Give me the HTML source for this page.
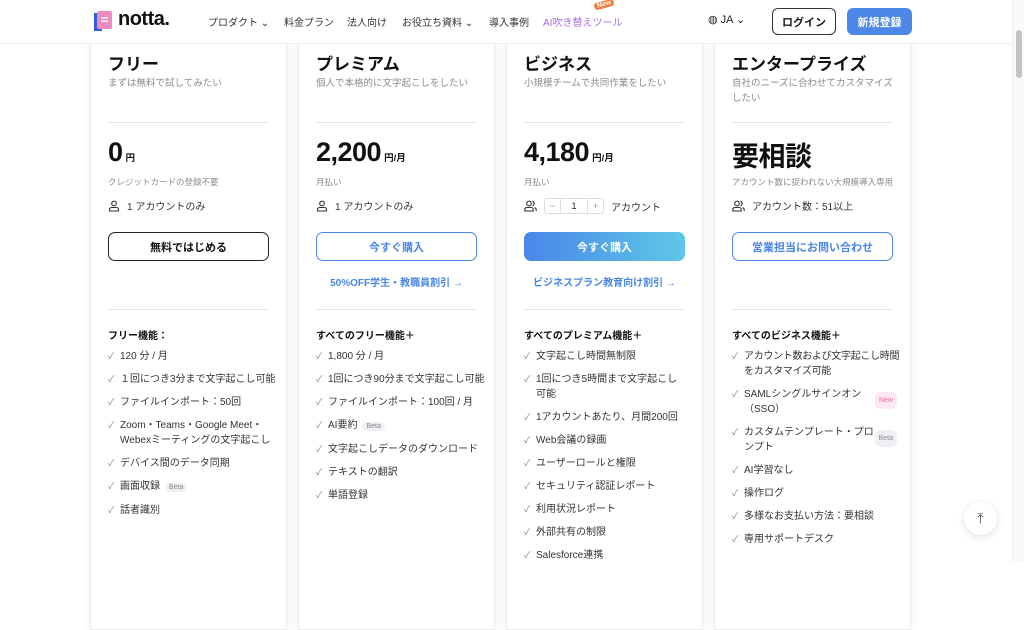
<!DOCTYPE html>
<html><head><meta charset="utf-8">
<style>
*{box-sizing:border-box;margin:0;padding:0}
body{width:1024px;height:562px;overflow:hidden;background:#fff;font-family:"Liberation Sans","Noto Sans CJK JP",sans-serif;color:#1d1d1f;position:relative}
.card{position:absolute;top:30px;width:197px;height:600px;background:#fff;border:1px solid #ececec;box-shadow:0 0 10px rgba(0,0,0,.07);padding:0 17px}
.t{position:absolute;left:17px;top:19px;font-size:17px;font-weight:bold;color:#111}
.s{position:absolute;left:17px;top:45px;width:165px;font-size:9.5px;color:#8a8a8f;line-height:15px}
.hr{position:absolute;left:17px;right:17px;height:1px;background:#e8e8ea}
.p{position:absolute;left:17px;top:106px;font-size:27px;font-weight:bold;color:#111;letter-spacing:-0.5px}
.p small{font-size:9.5px;letter-spacing:0;margin-left:3px}
.n{position:absolute;left:17px;top:145px;font-size:8.5px;color:#8a8a8f}
.a{position:absolute;left:17px;top:167px;font-size:10px;color:#333;display:flex;align-items:center;gap:7px}
.b{position:absolute;left:17px;right:17px;top:201px;height:29px;border-radius:7px;font-size:11px;font-weight:bold;display:flex;align-items:center;justify-content:center}
.l{position:absolute;left:0;right:0;top:243px;text-align:center;font-size:10px;font-weight:bold;color:#4a86e8}
.fh{position:absolute;left:17px;top:296px;font-size:10px;font-weight:bold;color:#111}
ul{position:absolute;left:17px;right:15px;top:318px;list-style:none}
li{font-size:10px;line-height:15px;color:#333;margin-bottom:8px;padding-left:12px;position:relative}
li:before{content:"✓";position:absolute;left:0;top:0;color:#888;font-size:9px}
.tag{font-size:7px;color:#888;background:#eef0f3;border-radius:6px;padding:1px 4px;margin-left:5px}
.tagn{color:#e86aa0;background:#fde8f1}
li.r{padding-right:18px;white-space:nowrap}
li.r .tag{position:absolute;right:-4px;top:5px}
header{position:absolute;top:0;left:0;width:1012px;height:44px;background:#fff;border-bottom:1px solid #eee;z-index:5}
nav span{position:absolute;top:14px;font-size:10px;color:#333}
.sb{position:absolute;right:0;top:0;width:12px;height:562px;background:#fafafa;border-left:1px solid #eee;z-index:6}
.sb div{position:absolute;left:3px;top:30px;width:6px;height:48px;background:#c4c4c4;border-radius:3px}
</style></head><body>
<header>
<svg style="position:absolute;left:92px;top:10px" width="22" height="24" viewBox="0 0 22 24"><rect x="2" y="3" width="8" height="18" fill="#2f5fe0"/><rect x="5" y="1" width="15" height="18" rx="2" fill="#f08bc0"/><rect x="9" y="7" width="7" height="1.5" fill="#fff"/><rect x="9" y="10.5" width="7" height="1.5" fill="#fff"/></svg>
<div style="position:absolute;left:118px;top:8px;font-size:20px;font-weight:bold;color:#111;letter-spacing:-0.5px">notta.</div>
<nav>
<span style="left:208px">プロダクト ⌄</span>
<span style="left:284px">料金プラン</span>
<span style="left:347px">法人向け</span>
<span style="left:402px">お役立ち資料 ⌄</span>
<span style="left:489px">導入事例</span>
<span style="left:543px;color:#a56be8">AI吹き替えツール</span>
</nav>
<div style="position:absolute;left:594px;top:1px;font-size:7px;color:#fff;background:#f07a3a;padding:0 3px;border-radius:3px;transform:rotate(-15deg);font-weight:bold">New</div>
<div style="position:absolute;left:708px;top:13px;font-size:11px;color:#222">◍ JA ⌄</div>
<div style="position:absolute;left:772px;top:8px;width:64px;height:27px;border:1.5px solid #333;border-radius:6px;font-size:11px;font-weight:bold;display:flex;align-items:center;justify-content:center">ログイン</div>
<div style="position:absolute;left:847px;top:8px;width:65px;height:27px;background:#4d88e8;border-radius:6px;font-size:11px;font-weight:bold;color:#fff;display:flex;align-items:center;justify-content:center">新規登録</div>
</header>
<div class="sb"><div></div></div>

<div class="card" style="left:90px">
<div class="t">フリー</div><div class="s">まずは無料で試してみたい</div>
<div class="hr" style="top:91px"></div>
<div class="p">0<small>円</small></div>
<div class="n">クレジットカードの登録不要</div>
<div class="a"><svg width="12" height="12" viewBox="0 0 12 12" fill="none" stroke="#333" stroke-width="1.1"><circle cx="6" cy="3.5" r="2.3"/><path d="M1.5 11h9V9.5c0-1.2-1-2-2.2-2H3.7c-1.2 0-2.2.8-2.2 2z"/></svg> 1 アカウントのみ</div>
<div class="b" style="border:1.5px solid #222;color:#111">無料ではじめる</div>
<div class="hr" style="top:278px"></div>
<div class="fh">フリー機能：</div>
<ul style="right:6px"><li>120 分 / 月</li><li>１回につき3分まで文字起こし可能</li><li>ファイルインポート：50回</li><li style="white-space:nowrap">Zoom・Teams・Google Meet・<br>Webexミーティングの文字起こし</li><li>デバイス間のデータ同期</li><li>画面収録<span class="tag">Beta</span></li><li>話者識別</li></ul>
</div>

<div class="card" style="left:298px">
<div class="t">プレミアム</div><div class="s">個人で本格的に文字起こしをしたい</div>
<div class="hr" style="top:91px"></div>
<div class="p">2,200<small>円/月</small></div>
<div class="n">月払い</div>
<div class="a"><svg width="12" height="12" viewBox="0 0 12 12" fill="none" stroke="#333" stroke-width="1.1"><circle cx="6" cy="3.5" r="2.3"/><path d="M1.5 11h9V9.5c0-1.2-1-2-2.2-2H3.7c-1.2 0-2.2.8-2.2 2z"/></svg> 1 アカウントのみ</div>
<div class="b" style="border:1.5px solid #4a86e8;color:#4a86e8">今すぐ購入</div>
<div class="l">50%OFF学生・教職員割引 →</div>
<div class="hr" style="top:278px"></div>
<div class="fh">すべてのフリー機能＋</div>
<ul style="right:6px"><li>1,800 分 / 月</li><li>1回につき90分まで文字起こし可能</li><li>ファイルインポート：100回 / 月</li><li>AI要約<span class="tag">Beta</span></li><li>文字起こしデータのダウンロード</li><li>テキストの翻訳</li><li>単語登録</li></ul>
</div>

<div class="card" style="left:506px">
<div class="t">ビジネス</div><div class="s">小規模チームで共同作業をしたい</div>
<div class="hr" style="top:91px"></div>
<div class="p">4,180<small>円/月</small></div>
<div class="n">月払い</div>
<div class="a"><svg width="13" height="12" viewBox="0 0 13 12" fill="none" stroke="#333" stroke-width="1.1"><circle cx="5" cy="3.5" r="2.3"/><path d="M0.8 11h8.4V9.5c0-1.2-1-2-2.2-2H3c-1.2 0-2.2.8-2.2 2z"/><path d="M8.5 1.3a2.3 2.3 0 0 1 0 4.4M10.5 7.6c1 .3 1.7 1 1.7 2V11"/></svg> <span style="display:inline-flex;border:1px solid #ddd;border-radius:3px;height:16px;font-size:9px;color:#999"><span style="width:15px;text-align:center;line-height:14px">−</span><span style="width:28px;text-align:center;line-height:14px;color:#222;border-left:1px solid #ddd;border-right:1px solid #ddd">1</span><span style="width:15px;text-align:center;line-height:14px">+</span></span> アカウント</div>
<div class="b" style="background:linear-gradient(90deg,#4a86e8,#5ec8e8);color:#fff">今すぐ購入</div>
<div class="l">ビジネスプラン教育向け割引 →</div>
<div class="hr" style="top:278px"></div>
<div class="fh">すべてのプレミアム機能＋</div>
<ul style="right:22px"><li>文字起こし時間無制限</li><li>1回につき5時間まで文字起こし可能</li><li>1アカウントあたり、月間200回</li><li>Web会議の録画</li><li>ユーザーロールと権限</li><li>セキュリティ認証レポート</li><li>利用状況レポート</li><li>外部共有の制限</li><li>Salesforce連携</li></ul>
</div>

<div class="card" style="left:714px">
<div class="t">エンタープライズ</div><div class="s">自社のニーズに合わせてカスタマイズしたい</div>
<div class="hr" style="top:91px"></div>
<div class="p" style="top:104px">要相談</div>
<div class="n">アカウント数に捉われない大規模導入専用</div>
<div class="a"><svg width="13" height="12" viewBox="0 0 13 12" fill="none" stroke="#333" stroke-width="1.1"><circle cx="5" cy="3.5" r="2.3"/><path d="M0.8 11h8.4V9.5c0-1.2-1-2-2.2-2H3c-1.2 0-2.2.8-2.2 2z"/><path d="M8.5 1.3a2.3 2.3 0 0 1 0 4.4M10.5 7.6c1 .3 1.7 1 1.7 2V11"/></svg> アカウント数：51以上</div>
<div class="b" style="border:1.5px solid #4a86e8;color:#4a86e8">営業担当にお問い合わせ</div>
<div class="hr" style="top:278px"></div>
<div class="fh">すべてのビジネス機能＋</div>
<ul style="right:17px"><li style="white-space:nowrap;letter-spacing:-0.3px">アカウント数および文字起こし時間<br>をカスタマイズ可能</li><li class="r">SAMLシングルサインオン<br>（SSO）<span class="tag tagn">New</span></li><li class="r">カスタムテンプレート・プロ<br>ンプト<span class="tag">Beta</span></li><li>AI学習なし</li><li>操作ログ</li><li>多様なお支払い方法：要相談</li><li>専用サポートデスク</li></ul>
</div>

<div style="position:absolute;left:964px;top:502px;width:33px;height:33px;border-radius:50%;background:#fff;box-shadow:0 2px 8px rgba(0,0,0,.12);display:flex;align-items:center;justify-content:center;font-size:14px;color:#445">⤒</div>
</body></html>
